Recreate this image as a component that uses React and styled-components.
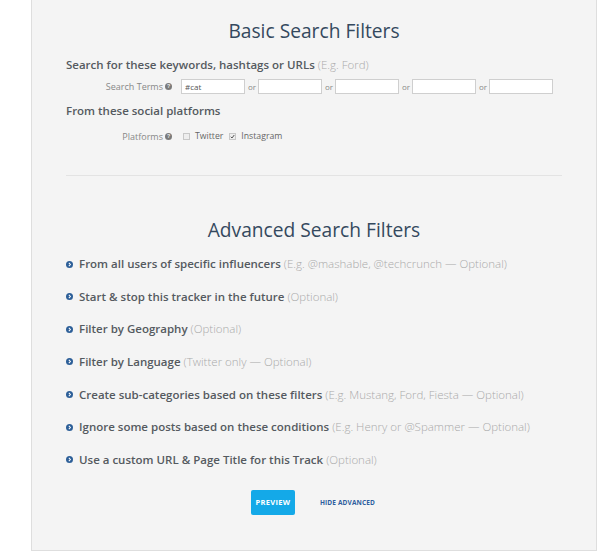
import React from "react";
import styled, { createGlobalStyle } from "styled-components";

const Global = createGlobalStyle`
  html, body { margin: 0; padding: 0; background: #ffffff; }
  body { font-family: "Open Sans", "Liberation Sans", sans-serif; }
`;

const Panel = styled.div`
  box-sizing: border-box;
  margin-left: 31px;
  width: 566px;
  height: 551px;
  background: #f4f4f4;
  border: 1px solid #dedede;
  border-top: none;
  padding: 19px 34px 0 34px;
  display: flex;
  flex-direction: column;
`;

const Title = styled.h2`
  margin: 0;
  font-size: 19.2px;
  line-height: 24px;
  font-weight: 400;
  color: #34495e;
  text-align: center;
  margin-top: ${(p) => p.$top || 0}px;
`;

const Heading = styled.div`
  margin-top: ${(p) => p.$top}px;
  font-size: 11.5px;
  line-height: 16px;
  font-weight: 600;
  color: #555a60;
`;

const Hint = styled.span`
  font-weight: 300;
  color: #aaaaaa;
`;

const FieldRow = styled.div`
  margin-top: ${(p) => p.$top}px;
  display: flex;
  align-items: center;
  height: ${(p) => p.$h}px;
`;

const Label = styled.div`
  width: ${(p) => p.$w}px;
  flex: none;
  box-sizing: border-box;
  display: flex;
  justify-content: flex-end;
  align-items: center;
  gap: 2px;
  font-size: 9px;
  color: #888888;
  padding-right: ${(p) => p.$pr}px;
`;

const Help = styled.svg`
  width: 7px;
  height: 7px;
  display: block;
`;

const TermInput = styled.input`
  box-sizing: border-box;
  width: 64px;
  height: 15px;
  margin: 0;
  padding: 0 3px;
  border: 1px solid #cfcfcf;
  background: #ffffff;
  font-family: "Open Sans", "Liberation Sans", sans-serif;
  font-size: 8px;
  color: #555;
  outline: none;
`;

const Or = styled.span`
  width: 13px;
  flex: none;
  padding-left: 3px;
  box-sizing: border-box;
  font-size: 8px;
  color: #888;
`;

const Check = styled.span`
  box-sizing: border-box;
  width: 7px;
  height: 7px;
  border: 1px solid #c8c8c8;
  background: #eeeeee;
  display: inline-flex;
  align-items: center;
  justify-content: center;
  margin-right: 5px;
  margin-left: ${(p) => p.$ml || 0}px;
`;

const CheckText = styled.span`
  font-size: 8.7px;
  color: #666;
`;

const Divider = styled.hr`
  margin: 33px 0 0 0;
  border: none;
  border-top: 1px solid #e3e3e3;
  height: 0;
`;

const List = styled.ul`
  list-style: none;
  margin: 14px 0 0 0;
  padding: 0;
  display: flex;
  flex-direction: column;
  gap: 16.67px;
`;

const Item = styled.li`
  display: flex;
  align-items: center;
  gap: 6px;
  font-size: 11.5px;
  line-height: 16px;
  font-weight: 600;
  color: #555a60;
`;

const Bullet = styled.svg`
  width: 7px;
  height: 7px;
  flex: none;
`;

const Actions = styled.div`
  margin-top: 22px;
  display: flex;
  justify-content: center;
  align-items: center;
  gap: 25px;
  padding-right: 2px;
`;

const Preview = styled.button`
  width: 44px;
  height: 25px;
  border: none;
  border-radius: 2px;
  background: #14a9e8;
  color: #ffffff;
  font-family: "Open Sans", "Liberation Sans", sans-serif;
  font-size: 7.5px;
  font-weight: 700;
  letter-spacing: 0.3px;
  padding: 0;
`;

const HideLink = styled.span`
  font-size: 6.5px;
  font-weight: 700;
  color: #2d5e9e;
  letter-spacing: 0.15px;
`;

const QIcon = () => (
  <Help viewBox="0 0 16 16">
    <circle cx="8" cy="8" r="8" fill="#7a7a7a" />
    <text x="8" y="12.3" textAnchor="middle" fontSize="12" fontWeight="700" fill="#f4f4f4" fontFamily="Liberation Sans, sans-serif">?</text>
  </Help>
);

const Chevron = () => (
  <Bullet viewBox="0 0 16 16">
    <circle cx="8" cy="8" r="8" fill="#2d5f98" />
    <path d="M6.5 4.5 L10 8 L6.5 11.5" stroke="#fff" strokeWidth="2.4" fill="none" />
  </Bullet>
);

const items = [
  ["From all users of specific influencers", "(E.g. @mashable, @techcrunch — Optional)"],
  ["Start & stop this tracker in the future", "(Optional)"],
  ["Filter by Geography", "(Optional)"],
  ["Filter by Language", "(Twitter only — Optional)"],
  ["Create sub-categories based on these filters", "(E.g. Mustang, Ford, Fiesta — Optional)"],
  ["Ignore some posts based on these conditions", "(E.g. Henry or @Spammer — Optional)"],
  ["Use a custom URL & Page Title for this Track", "(Optional)"],
];

export default function App() {
  const terms = ["#cat", "", "", "", ""];
  return (
    <>
      <Global />
      <Panel>
        <Title>Basic Search Filters</Title>
        <Heading $top={14}>
          Search for these keywords, hashtags or URLs <Hint>(E.g. Ford)</Hint>
        </Heading>
        <FieldRow $top={6} $h={15}>
          <Label $w={115} $pr={9}>
            Search Terms <QIcon />
          </Label>
          {terms.map((t, i) => (
            <React.Fragment key={i}>
              <TermInput defaultValue={t} />
              {i < terms.length - 1 && <Or>or</Or>}
            </React.Fragment>
          ))}
        </FieldRow>
        <Heading $top={9}>From these social platforms</Heading>
        <FieldRow $top={11} $h={12}>
          <Label $w={117} $pr={11}>
            Platforms <QIcon />
          </Label>
          <Check />
          <CheckText>Twitter</CheckText>
          <Check $ml={6}>
            <svg width="5" height="5" viewBox="0 0 10 10">
              <path d="M1.5 5.5 L4 8 L8.5 2" stroke="#555" strokeWidth="2" fill="none" />
            </svg>
          </Check>
          <CheckText>Instagram</CheckText>
        </FieldRow>
        <Divider />
        <Title $top={42}>Advanced Search Filters</Title>
        <List>
          {items.map(([a, b]) => (
            <Item key={a}>
              <Chevron />
              <span>
                {a} <Hint>{b}</Hint>
              </span>
            </Item>
          ))}
        </List>
        <Actions>
          <Preview>PREVIEW</Preview>
          <HideLink>HIDE ADVANCED</HideLink>
        </Actions>
      </Panel>
    </>
  );
}
